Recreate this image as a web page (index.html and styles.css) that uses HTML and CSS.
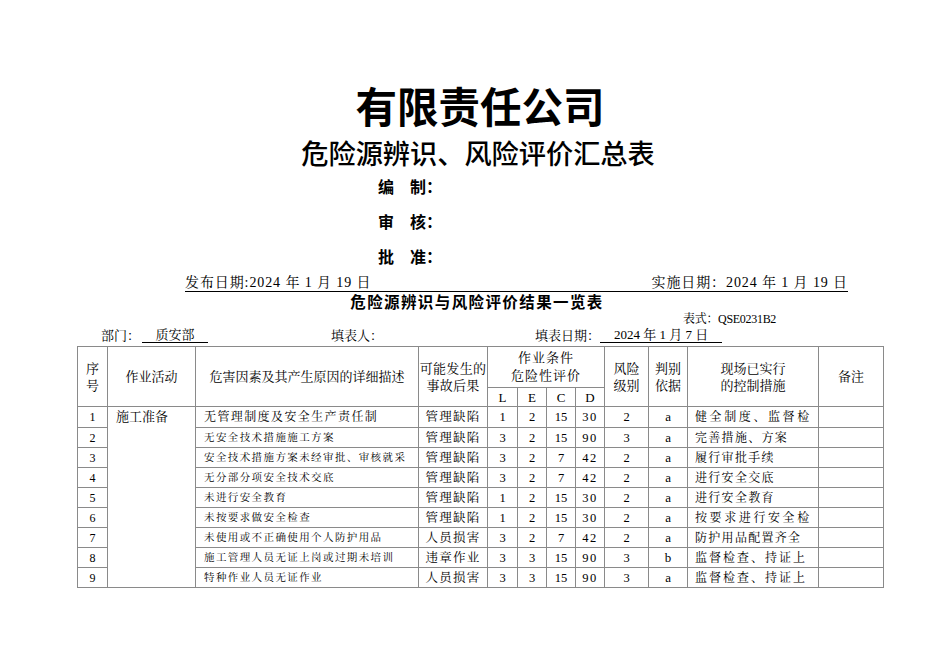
FILE: index.html
```html
<!DOCTYPE html>
<html lang="zh-CN">
<head>
<meta charset="utf-8">
<title>危险源辨识、风险评价汇总表</title>
<link rel="stylesheet" href="styles.css">
</head>
<body>
<div class="page">
  <h1 class="title">有限责任公司</h1>
  <h2 class="subtitle">危险源辨识、风险评价汇总表</h2>
  <div class="signs">
    <div class="sign">编　制：</div>
    <div class="sign">审　核：</div>
    <div class="sign">批　准：</div>
  </div>
  <div class="dates">
    <span>发布日期:2024 年 1 月 19 日</span>
    <span>实施日期：2024 年 1 月 19 日</span>
  </div>
  <div class="list-title">危险源辨识与风险评价结果一览表</div>
  <div class="form-code">表式：QSE0231B2</div>
  <div class="meta">
    <span class="dept">部门：<span class="fill fill-dept">质安部</span></span>
    <span class="filler">填表人：</span>
    <span class="fdate">填表日期：<span class="fill fill-date">2024 年 1 月 7 日</span></span>
  </div>
  <table class="grid">
    <colgroup>
      <col class="w-no"><col class="w-act"><col class="w-desc"><col class="w-res">
      <col class="w-n"><col class="w-n2"><col class="w-n2"><col class="w-n2">
      <col class="w-lvl"><col class="w-basis"><col class="w-ctrl"><col class="w-note">
    </colgroup>
    <thead>
      <tr class="h1">
        <th rowspan="2">序<br>号</th>
        <th rowspan="2">作业活动</th>
        <th rowspan="2">危害因素及其产生原因的详细描述</th>
        <th rowspan="2" class="tight">可能发生的<br>事故后果</th>
        <th colspan="4" class="spaced">作业条件<br>危险性评价</th>
        <th rowspan="2">风险<br>级别</th>
        <th rowspan="2">判别<br>依据</th>
        <th rowspan="2">现场已实行<br>的控制措施</th>
        <th rowspan="2">备注</th>
      </tr>
      <tr class="h2">
        <th>L</th><th>E</th><th>C</th><th>D</th>
      </tr>
    </thead>
    <tbody>
      <tr class="r r-first">
        <td class="no">1</td>
        <td class="act" rowspan="9">施工准备</td>
        <td class="desc big">无管理制度及安全生产责任制</td>
        <td class="res">管理缺陷</td>
        <td class="num">1</td><td class="num">2</td><td class="num">15</td><td class="num d">30</td>
        <td class="num">2</td><td class="basis">a</td>
        <td class="ctrl wide">健全制度、监督检</td><td></td>
      </tr>
      <tr class="r">
        <td class="no">2</td>
        <td class="desc">无安全技术措施施工方案</td>
        <td class="res">管理缺陷</td>
        <td class="num">3</td><td class="num">2</td><td class="num">15</td><td class="num d">90</td>
        <td class="num">3</td><td class="basis">a</td>
        <td class="ctrl">完善措施、方案</td><td></td>
      </tr>
      <tr class="r">
        <td class="no">3</td>
        <td class="desc">安全技术措施方案未经审批、审核就采</td>
        <td class="res">管理缺陷</td>
        <td class="num">3</td><td class="num">2</td><td class="num">7</td><td class="num d">42</td>
        <td class="num">2</td><td class="basis">a</td>
        <td class="ctrl">履行审批手续</td><td></td>
      </tr>
      <tr class="r">
        <td class="no">4</td>
        <td class="desc">无分部分项安全技术交底</td>
        <td class="res">管理缺陷</td>
        <td class="num">3</td><td class="num">2</td><td class="num">7</td><td class="num d">42</td>
        <td class="num">2</td><td class="basis">a</td>
        <td class="ctrl">进行安全交底</td><td></td>
      </tr>
      <tr class="r">
        <td class="no">5</td>
        <td class="desc">未进行安全教育</td>
        <td class="res">管理缺陷</td>
        <td class="num">1</td><td class="num">2</td><td class="num">15</td><td class="num d">30</td>
        <td class="num">2</td><td class="basis">a</td>
        <td class="ctrl">进行安全教育</td><td></td>
      </tr>
      <tr class="r">
        <td class="no">6</td>
        <td class="desc">未按要求做安全检查</td>
        <td class="res">管理缺陷</td>
        <td class="num">1</td><td class="num">2</td><td class="num">15</td><td class="num d">30</td>
        <td class="num">2</td><td class="basis">a</td>
        <td class="ctrl wide">按要求进行安全检</td><td></td>
      </tr>
      <tr class="r">
        <td class="no">7</td>
        <td class="desc">未使用或不正确使用个人防护用品</td>
        <td class="res">人员损害</td>
        <td class="num">3</td><td class="num">2</td><td class="num">7</td><td class="num d">42</td>
        <td class="num">2</td><td class="basis">a</td>
        <td class="ctrl">防护用品配置齐全</td><td></td>
      </tr>
      <tr class="r">
        <td class="no">8</td>
        <td class="desc">施工管理人员无证上岗或过期未培训</td>
        <td class="res">违章作业</td>
        <td class="num">3</td><td class="num">3</td><td class="num">15</td><td class="num d">90</td>
        <td class="num">3</td><td class="basis">b</td>
        <td class="ctrl mid">监督检查、持证上</td><td></td>
      </tr>
      <tr class="r">
        <td class="no">9</td>
        <td class="desc">特种作业人员无证作业</td>
        <td class="res">人员损害</td>
        <td class="num">3</td><td class="num">3</td><td class="num">15</td><td class="num d">90</td>
        <td class="num">3</td><td class="basis">a</td>
        <td class="ctrl mid">监督检查、持证上</td><td></td>
      </tr>
    </tbody>
  </table>
</div>
</body>
</html>
```

FILE: styles.css
```css
html, body {
  margin: 0;
  padding: 0;
  background: #ffffff;
}

body {
  width: 950px;
  height: 672px;
  overflow: hidden;
  color: #000;
  font-family: "Liberation Serif", "Noto Serif CJK SC", "Noto Sans CJK SC", serif;
}

.page {
  padding-top: 81px;
}

.title {
  margin: 0;
  text-align: center;
  font-family: "Noto Sans CJK SC", sans-serif;
  font-weight: 700;
  font-size: 41.5px;
  line-height: 48px;
  padding-left: 10px;
}

.subtitle {
  margin: 6px 0 0 0;
  text-align: center;
  font-family: "Noto Sans CJK SC", sans-serif;
  font-weight: 500;
  font-size: 27.2px;
  line-height: 34px;
  padding-left: 6px;
}

.signs {
  padding-left: 378px;
}

.sign {
  font-family: "Noto Sans CJK SC", sans-serif;
  font-weight: 700;
  font-size: 16px;
  line-height: 35px;
}

.dates {
  display: flex;
  justify-content: space-between;
  margin-left: 185px;
  width: 663px;
  border-bottom: 1px solid #000;
  font-size: 14px;
  line-height: 17px;
  letter-spacing: 0.9px;
  white-space: pre;
}

.list-title {
  text-align: center;
  font-family: "Noto Sans CJK SC", sans-serif;
  font-weight: 700;
  font-size: 15.5px;
  line-height: 18px;
  letter-spacing: 1.4px;
  padding-left: 4px;
}

.form-code {
  padding-left: 683px;
  font-size: 12px;
  line-height: 16px;
  margin-top: 1px;
  letter-spacing: -0.3px;
}

.meta {
  display: flex;
  padding-left: 101px;
  font-size: 13px;
  line-height: 18px;
}

.dept {
  width: 230px;
  display: flex;
}

.filler {
  width: 204px;
}

.fdate {
  display: flex;
}

.fill {
  display: inline-block;
  border-bottom: 1px solid #000;
  line-height: 15px;
  height: 15px;
}

.fill-dept {
  width: 66px;
  margin-left: 2px;
  text-align: center;
}

.fill-date {
  width: 108px;
  margin-left: 0;
  padding-left: 14px;
}

/* table */
.grid {
  margin-left: 77px;
  margin-top: 1px;
  width: 807px;
  table-layout: fixed;
  border-collapse: collapse;
  font-size: 13px;
}

.grid th,
.grid td {
  border: 1px solid #8a8a8a;
  padding: 0;
  font-weight: 400;
  text-align: center;
  vertical-align: middle;
  overflow: hidden;
  white-space: nowrap;
}

.grid thead th {
  line-height: 17px;
}

.w-no { width: 30px; }
.w-act { width: 88px; }
.w-desc { width: 223px; }
.w-res { width: 69px; }
.w-n { width: 30px; }
.w-n2 { width: 29px; }
.w-lvl { width: 44px; }
.w-basis { width: 39px; }
.w-ctrl { width: 131px; }
.w-note { width: 65px; }

.h1 { height: 41px; }
.h2 { height: 19px; }

.grid th.tight {
  letter-spacing: 0.3px;
}

.grid th.spaced {
  letter-spacing: 1px;
  line-height: 18px;
}

.h2 th {
  font-size: 13px;
  line-height: 18px;
}

.r {
  height: 20px;
}

.r-first {
  height: 21px;
}

.grid td {
  line-height: 18px;
}

.grid td.no {
  font-size: 12px;
}

.grid td.act {
  vertical-align: top;
  text-align: left;
  padding-left: 8px;
  font-size: 13px;
  line-height: 19px;
}

.grid td.desc {
  text-align: left;
  padding-left: 8px;
  font-size: 10.5px;
  letter-spacing: 1.4px;
}

.grid td.desc.big {
  font-size: 12px;
  letter-spacing: 1.4px;
}

.grid td.res {
  font-size: 12.5px;
  letter-spacing: 1.2px;
}

.grid td.num {
  font-size: 12.5px;
}

.grid td.num.d {
  letter-spacing: 1.5px;
}

.grid td.basis {
  font-size: 13px;
}

.grid td.ctrl {
  text-align: left;
  padding-left: 7px;
  font-size: 12px;
  letter-spacing: 1.3px;
}

.grid td.ctrl.wide {
  letter-spacing: 2.6px;
}

.grid td.ctrl.mid {
  letter-spacing: 2px;
}
```
